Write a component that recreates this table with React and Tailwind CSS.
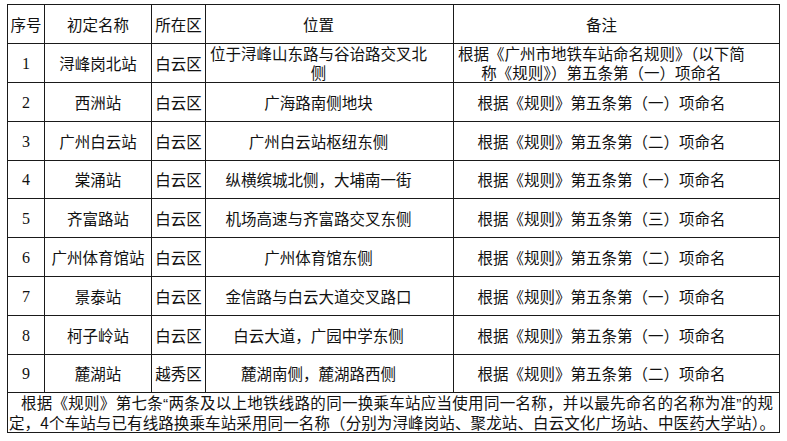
const ROWS = [
  ['1', '浔峰岗北站', '白云区', ['位于浔峰山东路与谷诒路交叉北', '侧'], ['根据《广州市地铁车站命名规则》（以下简', '称《规则》）第五条第（一）项命名']],
  ['2', '西洲站', '白云区', '广海路南侧地块', '根据《规则》第五条第（一）项命名'],
  ['3', '广州白云站', '白云区', '广州白云站枢纽东侧', '根据《规则》第五条第（二）项命名'],
  ['4', '棠涌站', '白云区', '纵横缤城北侧，大埔南一街', '根据《规则》第五条第（一）项命名'],
  ['5', '齐富路站', '白云区', '机场高速与齐富路交叉东侧', '根据《规则》第五条第（三）项命名'],
  ['6', '广州体育馆站', '白云区', '广州体育馆东侧', '根据《规则》第五条第（二）项命名'],
  ['7', '景泰站', '白云区', '金信路与白云大道交叉路口', '根据《规则》第五条第（一）项命名'],
  ['8', '柯子岭站', '白云区', '白云大道，广园中学东侧', '根据《规则》第五条第（一）项命名'],
  ['9', '麓湖站', '越秀区', '麓湖南侧，麓湖路西侧', '根据《规则》第五条第（二）项命名'],
];

const HEIGHTS = ['h-[39px]', 'h-[39px]', 'h-[39px]', 'h-[38px]', 'h-[39px]', 'h-[39px]', 'h-[39px]', 'h-[39px]', 'h-[38px]'];

const cell = 'border border-[#1a1a1a] p-0 text-center align-middle';
const quote = "font-['Liberation_Sans',sans-serif]";

function Lines({ value }) {
  if (!Array.isArray(value)) return value;
  return value.map((line, i) => (
    <span key={i} className="block">
      {line}
    </span>
  ));
}

export default function App() {
  return (
    <div className="min-h-[441px] w-[787px] bg-white pl-[7px] pt-[4px] text-[15.5px] leading-[19px] text-[#111] font-['Noto_Sans_CJK_SC',sans-serif]">
      <table className="w-[772px] table-fixed border-collapse">
        <colgroup>
          <col className="w-[37px]" />
          <col className="w-[107px]" />
          <col className="w-[54px]" />
          <col className="w-[248px]" />
          <col className="w-[326px]" />
        </colgroup>
        <thead>
          <tr className="h-[39px]">
            <th className={`${cell} font-normal`}>序号</th>
            <th className={`${cell} font-normal`}>初定名称</th>
            <th className={`${cell} font-normal`}>所在区</th>
            <th className={`${cell} pr-[22px] font-normal`}>位置</th>
            <th className={`${cell} pr-[30px] font-normal`}>备注</th>
          </tr>
        </thead>
        <tbody>
          {ROWS.map((row, i) => (
            <tr key={row[0]} className={HEIGHTS[i]}>
              <td className={`${cell} text-[16px] font-['Liberation_Serif',serif]`}>{row[0]}</td>
              <td className={cell}>{row[1]}</td>
              <td className={cell}>{row[2]}</td>
              <td className={`${cell} pr-[22px]`}>
                <Lines value={row[3]} />
              </td>
              <td className={`${cell} pr-[30px]`}>
                <Lines value={row[4]} />
              </td>
            </tr>
          ))}
          <tr className="h-[39px]">
            <td colSpan={5} className="border border-[#1a1a1a] p-0 align-middle">
              <span className="block pl-[13px] pr-[6px] text-justify [text-align-last:justify]">
                根据《规则》第七条<span className={quote}>“</span>两条及以上地铁线路的同一换乘车站应当使用同一名称，并以最先命名的名称为准<span className={quote}>”</span>的规
              </span>
              <span className="block pl-[1px] pr-[4px] text-justify [text-align-last:justify]">
                定，4个车站与已有线路换乘车站采用同一名称（分别为浔峰岗站、聚龙站、白云文化广场站、中医药大学站）。
              </span>
            </td>
          </tr>
        </tbody>
      </table>
    </div>
  );
}
